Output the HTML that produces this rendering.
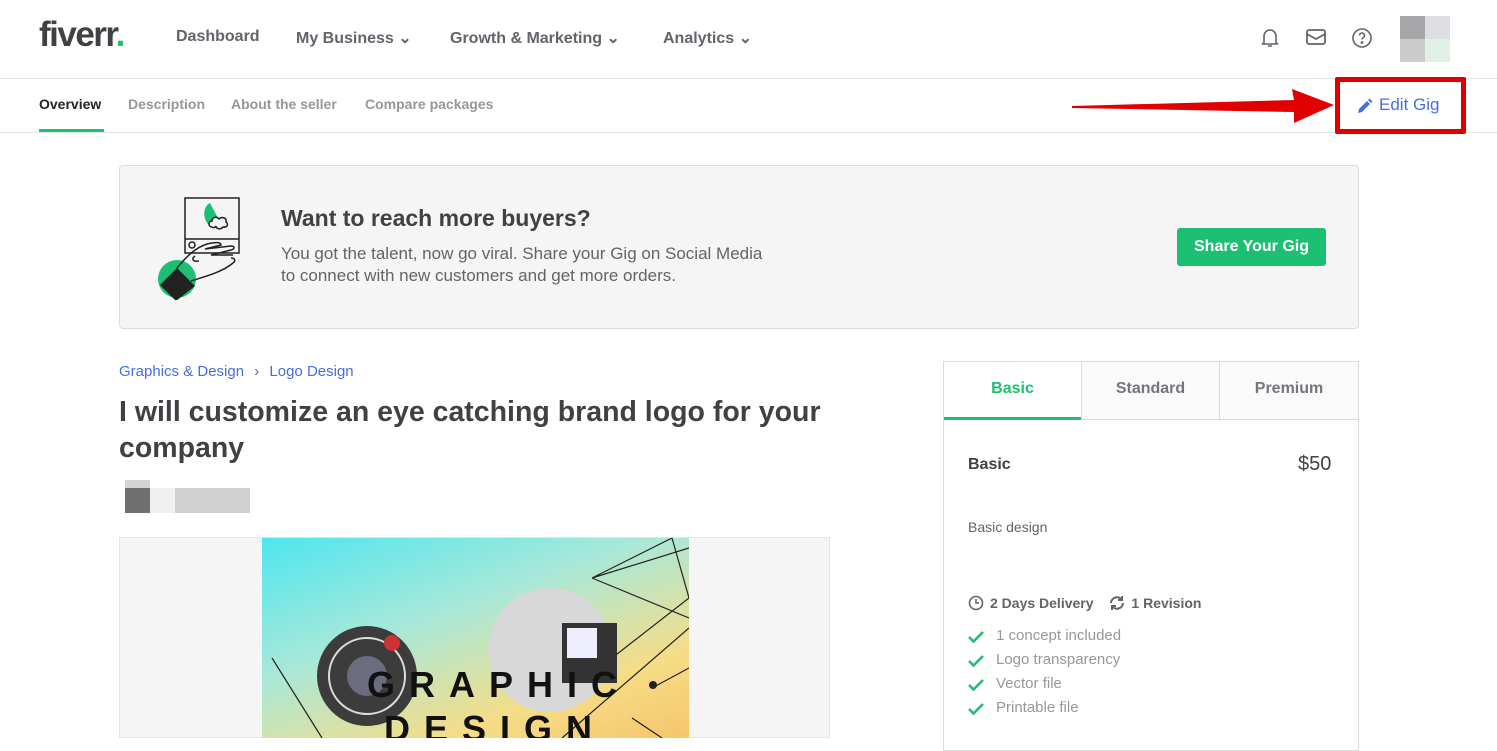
<!DOCTYPE html>
<html><head><meta charset="utf-8"><style>
*{box-sizing:border-box;margin:0;padding:0}
body{width:1497px;height:738px;overflow:hidden;background:#fff;font-family:"Liberation Sans",Arial,sans-serif;position:relative;color:#404145}
.a{position:absolute}
.nav{font-size:16px;font-weight:bold;color:#62646a;top:28px}
.sub{font-size:14px;font-weight:bold;color:#95979d;top:96px}
.chk{position:absolute;left:968px;font-size:15px;color:#95979d}
.chk svg{vertical-align:-3px;margin-right:12px}
</style></head><body>
<div class="a" style="left:39px;top:15px;font-size:35px;font-weight:bold;color:#404145;letter-spacing:-1.5px">fiverr<span style="color:#1dbf73">.</span></div>
<div class="a nav" style="left:176px">Dashboard</div>
<div class="a nav" style="left:296px">My Business ⌄</div>
<div class="a nav" style="left:450px">Growth &amp; Marketing ⌄</div>
<div class="a nav" style="left:663px">Analytics ⌄</div>
<svg class="a" style="left:1259px;top:27px" width="22" height="22" viewBox="0 0 22 22" fill="none" stroke="#62646a" stroke-width="1.6"><path d="M5 16V9a6 6 0 0 1 12 0v7l2 1H3z M9 19h4"/></svg>
<svg class="a" style="left:1305px;top:27px" width="22" height="20" viewBox="0 0 22 20" fill="none" stroke="#62646a" stroke-width="1.8"><rect x="2" y="3" width="18" height="14" rx="2"/><path d="M2 7l9 5 9-5"/></svg>
<svg class="a" style="left:1351px;top:27px" width="22" height="22" viewBox="0 0 22 22" fill="none" stroke="#62646a" stroke-width="1.6"><circle cx="11" cy="11" r="9"/><path d="M8.5 8.5a2.5 2.5 0 1 1 3.5 2.3c-.7.4-1 .9-1 1.7"/><circle cx="11" cy="15.5" r=".6" fill="#62646a"/></svg>
<div class="a" style="left:1400px;top:16px;width:25px;height:23px;background:#a6a5a7"></div>
<div class="a" style="left:1425px;top:16px;width:25px;height:23px;background:#dddee1"></div>
<div class="a" style="left:1400px;top:39px;width:25px;height:23px;background:#cccccc"></div>
<div class="a" style="left:1425px;top:39px;width:25px;height:23px;background:#dff0e6"></div>
<div class="a" style="left:0;top:78px;width:1497px;height:1px;background:#e4e5e7"></div>
<div class="a sub" style="left:39px;color:#222325">Overview</div>
<div class="a" style="left:39px;top:129px;width:65px;height:4px;background:#1dbf73"></div>
<div class="a sub" style="left:128px">Description</div>
<div class="a sub" style="left:231px">About the seller</div>
<div class="a sub" style="left:365px">Compare packages</div>
<div class="a" style="left:0;top:132px;width:1497px;height:1px;background:#e4e5e7"></div>
<svg class="a" style="left:1072px;top:88px" width="262" height="36" viewBox="0 0 262 36"><path d="M0 18 L222 12 L220 1 L262 17 L222 35 L222 24 L0 20Z" fill="#e00000"/></svg>
<div class="a" style="left:1335px;top:77px;width:131px;height:57px;border:5px solid #e00000;border-radius:2px;background:#fff"></div>
<svg class="a" style="left:1357px;top:98px" width="16" height="16" viewBox="0 0 16 16"><path d="M1 15l1-4 8-8 3 3-8 8z M11 2l1.5-1.5 3 3L14 5z" fill="#446ee7"/></svg>
<div class="a" style="left:1379px;top:95px;font-size:17px;color:#446ee7">Edit Gig</div>
<div class="a" style="left:119px;top:165px;width:1240px;height:164px;background:#f5f5f5;border:1px solid #dadbdd;border-radius:4px"></div>
<svg class="a" style="left:155px;top:195px" width="90" height="105" viewBox="0 0 90 105" fill="none" stroke="#222" stroke-width="1.5">
<rect x="30" y="3" width="54" height="55" fill="#f5f5f5"/><path d="M30 44h54"/>
<path d="M55 8c-8 4-8 18 2 25l8-6z" fill="#1dbf73" stroke="none"/>
<path d="M57 32c-4 0-4-6 0-6 0-4 5-5 7-2 3-3 8-1 7 3 3 2 1 6-3 5-2 3-7 2-7-1-1 2-3 2-4 1z" fill="#f5f5f5"/>
<circle cx="37" cy="50" r="3"/>
<circle cx="22" cy="84" r="19" fill="#1dbf73" stroke="none"/>
<path d="M5 90l17-17 18 18-19 15z" fill="#222" stroke="none"/>
<path d="M22 73c10-12 18-20 30-24 8-2 14-2 14 1l-16 4 26-3c4 0 4 3 0 4l-20 5h22M40 61c-4 3-2 6 4 5M36 86c12-4 30-8 42-18 3-2 2-5-2-5"/></svg>
<div class="a" style="left:281px;top:205px;font-size:23px;font-weight:bold;color:#404145">Want to reach more buyers?</div>
<div class="a" style="left:281px;top:243px;font-size:17px;line-height:22px;color:#62646a">You got the talent, now go viral. Share your Gig on Social Media<br>to connect with new customers and get more orders.</div>
<div class="a" style="left:1177px;top:228px;width:149px;height:38px;background:#1dbf73;border-radius:3px;color:#fff;font-weight:bold;font-size:16px;text-align:center;line-height:38px">Share Your Gig</div>
<div class="a" style="left:119px;top:363px;font-size:15px;color:#446ee7">Graphics &amp; Design <span style="color:#62646a;margin:0 6px">›</span> Logo Design</div>
<div class="a" style="left:119px;top:394px;font-size:28.5px;line-height:36px;font-weight:bold;color:#404145;width:750px">I will customize an eye catching brand logo for your company</div>
<div class="a" style="left:125px;top:480px;width:25px;height:33px;background:#6f6f6f"></div>
<div class="a" style="left:125px;top:480px;width:25px;height:8px;background:#d4d4d4"></div>
<div class="a" style="left:150px;top:488px;width:25px;height:25px;background:#f0f0f0"></div>
<div class="a" style="left:175px;top:488px;width:75px;height:25px;background:#d0d0d0"></div>
<div class="a" style="left:119px;top:537px;width:711px;height:201px;background:#f5f5f5;border:1px solid #e4e5e7"></div>
<div class="a" style="left:262px;top:538px;width:427px;height:200px;overflow:hidden;background:linear-gradient(160deg,#4ee6ef 0%,#a9e8d8 40%,#f5dd88 75%,#f7c56a 100%)">
<svg class="a" style="left:0;top:0" width="427" height="200"><path d="M330 40L427 10M330 40L410 0M330 40L427 80M350 120L427 60M300 200L427 90M390 150L427 130M10 120L60 200M370 180L400 200M410 0L427 60" stroke="#222" stroke-width="1.2" fill="none"/><circle cx="391" cy="147" r="4" fill="#222"/><circle cx="105" cy="138" r="50" fill="#3c3c3c"/><circle cx="105" cy="138" r="38" fill="none" stroke="#ddd" stroke-width="2"/><circle cx="105" cy="138" r="20" fill="#6c6c80"/><circle cx="130" cy="105" r="8" fill="#c33"/><circle cx="288" cy="112" r="62" fill="#d8d8d8"/><rect x="300" y="85" width="55" height="60" fill="#333"/><rect x="305" y="90" width="30" height="30" fill="#eef"/></svg>
<div class="a" style="left:105px;top:126px;font-size:36px;font-weight:bold;color:#111;letter-spacing:14px">GRAPHIC</div>
<div class="a" style="left:122px;top:170px;font-size:36px;font-weight:bold;color:#111;letter-spacing:14px">DESIGN</div>
</div>
<div class="a" style="left:943px;top:361px;width:416px;height:390px;border:1px solid #dadbdd"></div>
<div class="a" style="left:944px;top:362px;width:414px;height:58px;background:#fff;border-bottom:1px solid #dadbdd"></div>
<div class="a" style="left:1081px;top:362px;width:139px;height:58px;background:#fafafa;border-left:1px solid #dadbdd;border-right:1px solid #dadbdd;border-bottom:1px solid #dadbdd"></div>
<div class="a" style="left:1220px;top:362px;width:138px;height:58px;background:#fafafa;border-bottom:1px solid #dadbdd"></div>
<div class="a" style="left:944px;top:417px;width:137px;height:3px;background:#1dbf73"></div>
<div class="a" style="left:944px;top:380px;width:137px;text-align:center;font-size:16px;font-weight:bold;color:#1dbf73">Basic</div>
<div class="a" style="left:1081px;top:380px;width:139px;text-align:center;font-size:16px;font-weight:bold;color:#74767e">Standard</div>
<div class="a" style="left:1220px;top:380px;width:138px;text-align:center;font-size:16px;font-weight:bold;color:#74767e">Premium</div>
<div class="a" style="left:968px;top:456px;font-size:16px;font-weight:bold;color:#404145">Basic</div>
<div class="a" style="left:1298px;top:453px;font-size:20px;color:#404145">$50</div>
<div class="a" style="left:968px;top:519px;font-size:14px;color:#62646a">Basic design</div>
<div class="a" style="left:968px;top:595px;font-size:14px;font-weight:bold;color:#62646a"><svg width="16" height="16" viewBox="0 0 16 16" style="vertical-align:-3px;margin-right:6px" fill="none" stroke="#62646a" stroke-width="1.6"><circle cx="8" cy="8" r="6.5"/><path d="M8 4v4h3"/></svg>2 Days Delivery <svg width="16" height="16" viewBox="0 0 16 16" style="vertical-align:-3px;margin:0 6px 0 12px" fill="none" stroke="#62646a" stroke-width="2"><path d="M2 8a6 6 0 0 1 11-3M14 8a6 6 0 0 1-11 3M13 1v4H9M3 15v-4h4"/></svg>1 Revision</div>
<div class="chk" style="top:627px"><svg width="16" height="12" viewBox="0 0 16 12"><path d="M1 6l4.5 4.5L15 1" stroke="#1dbf73" stroke-width="2.6" fill="none"/></svg>1 concept included</div>
<div class="chk" style="top:651px"><svg width="16" height="12" viewBox="0 0 16 12"><path d="M1 6l4.5 4.5L15 1" stroke="#1dbf73" stroke-width="2.6" fill="none"/></svg>Logo transparency</div>
<div class="chk" style="top:675px"><svg width="16" height="12" viewBox="0 0 16 12"><path d="M1 6l4.5 4.5L15 1" stroke="#1dbf73" stroke-width="2.6" fill="none"/></svg>Vector file</div>
<div class="chk" style="top:699px"><svg width="16" height="12" viewBox="0 0 16 12"><path d="M1 6l4.5 4.5L15 1" stroke="#1dbf73" stroke-width="2.6" fill="none"/></svg>Printable file</div>
</body></html>
